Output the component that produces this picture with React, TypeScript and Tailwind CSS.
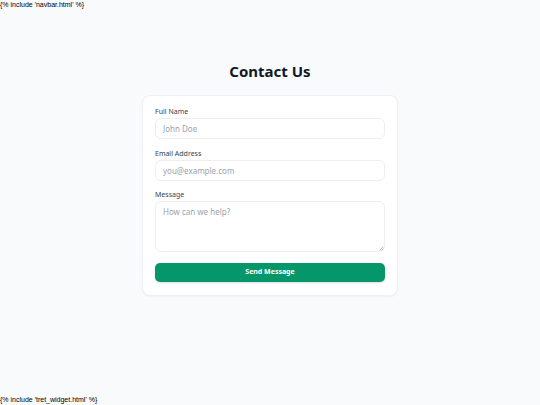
import React from "react";

export default function App() {
  return (
    <div className="h-[405px] w-[540px] bg-[#f8fafc] flex flex-col overflow-hidden" style={{ fontFamily: '"Noto Sans", sans-serif' }}>
      <div className="text-[7px] leading-[9px] text-black" style={{ fontFamily: '"Liberation Sans", Arial, sans-serif' }}>
        {"{% include 'navbar.html' %}"}
      </div>
      <main className="flex-1 flex flex-col items-center pt-[52px]">
        <h1 className="text-[15px] leading-[20px] font-bold text-[#111827] mb-[14px]">Contact Us</h1>
        <form className="w-[256px] bg-white border border-[#eef0f3] rounded-[8px] shadow-[0_1px_2px_rgba(0,0,0,0.04)] px-[12px] pt-[11px] pb-[13px] flex flex-col" onSubmit={(e) => e.preventDefault()}>
          <label className="text-[7px] leading-[10px] text-[#374151] mb-[1px]">Full Name</label>
          <input
            type="text"
            placeholder="John Doe"
            className="h-[21px] w-full border border-[#eceef1] rounded-[6px] px-[7px] text-[8px] text-gray-700 placeholder:text-[#9ca3af] outline-none"
          />
          <label className="text-[7px] leading-[10px] text-[#374151] mt-[10px] mb-[1px]">Email Address</label>
          <input
            type="email"
            placeholder="you@example.com"
            className="h-[21px] w-full border border-[#eceef1] rounded-[6px] px-[7px] text-[8px] text-gray-700 placeholder:text-[#9ca3af] outline-none"
          />
          <label className="text-[7px] leading-[10px] text-[#374151] mt-[9px] mb-[1px]">Message</label>
          <div className="relative">
            <textarea
              placeholder="How can we help?"
              className="block h-[51px] w-full resize-none border border-[#eceef1] rounded-[6px] px-[7px] py-[4px] text-[8px] leading-[12px] text-gray-700 placeholder:text-[#9ca3af] outline-none"
            />
            <svg className="absolute right-[1px] bottom-[1px] pointer-events-none" width="5" height="5" viewBox="0 0 5 5">
              <path d="M4.5 0.5 L0.5 4.5 M4.5 2.5 L2.5 4.5" stroke="#9ca3af" strokeWidth="0.7" />
            </svg>
          </div>
          <button
            type="submit"
            className="mt-[11px] h-[19px] w-full bg-[#059669] text-white text-[7px] font-bold rounded-[5px] shadow-[0_1px_2px_rgba(0,0,0,0.15)]"
          >
            Send Message
          </button>
        </form>
      </main>
      <div className="text-[7px] leading-[9px] text-black mb-[1px]" style={{ fontFamily: '"Liberation Sans", Arial, sans-serif' }}>
        {"{% include 'tret_widget.html' %}"}
      </div>
    </div>
  );
}
